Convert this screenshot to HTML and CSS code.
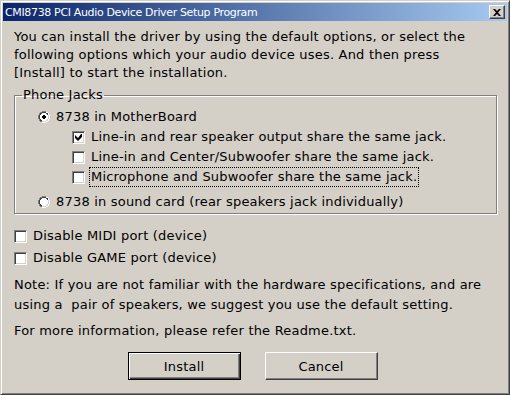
FILE: index.html
```html
<!DOCTYPE html>
<html>
<head>
<meta charset="utf-8">
<link rel="stylesheet" href="styles.css">
</head>
<body>
<div class="window">
  <div class="titlebar">
    <span class="title">CMI8738 PCI Audio Device Driver Setup Program</span>
    <span class="close"><svg width="8" height="7" viewBox="0 0 8 7"><path d="M0 0h2l2 2 2-2h2L5 3.5 8 7H6L4 5 2 7H0l3-3.5z" fill="#000"/></svg></span>
  </div>
  <div class="content">
    <p class="intro">You can install the driver by using the default options, or select the<br>following options which your audio device uses. And then press<br>[Install] to start the installation.</p>
    <fieldset class="group">
      <legend>Phone Jacks</legend>
      <div class="row lvl1">
        <span class="radio"><svg width="12" height="12" viewBox="0 0 12 12"><path d="M4 0h4v1h2v1h1v2h1v4h-1v2h-1v1H8v1H4v-1H2v-1H1V8H0V4h1V2h1V1h2z" fill="#808080"/><path d="M8 1h2v1h1v2h1v4h-1v2h-1v1H8v1H4v-1h4v-1h2V8h1V4h-1V2H8z" fill="#fff"/><path d="M4 1h4v1h2v2h1v4h-1v2H8v1H4v-1H2V8H1V4h1V2h2z" fill="#404040"/><path d="M4 2h4v1h1v1h1v4H9v1H8v1H4V9H3V8H2V4h1V3h1z" fill="#fff"/><path d="M10 4h1v4h-1v2H8v1H4v-1h4V9h1V8h1z" fill="#d4d0c8"/><path d="M5 4h2v1h1v2H7v1H5V7H4V5h1z" fill="#000"/></svg></span>
        <span class="label">8738 in MotherBoard</span>
      </div>
      <div class="row lvl2">
        <span class="check"><svg width="7" height="7" viewBox="0 0 7 7"><path d="M6 0h1v3L3 7 0 4V1l3 3z" fill="#000"/></svg></span>
        <span class="label">Line-in and rear speaker output share the same jack.</span>
      </div>
      <div class="row lvl2">
        <span class="check"></span>
        <span class="label">Line-in and Center/Subwoofer share the same jack.</span>
      </div>
      <div class="row lvl2">
        <span class="check"></span>
        <span class="label focus">Microphone and Subwoofer share the same jack.</span>
      </div>
      <div class="row lvl1 sep">
        <span class="radio"><svg width="12" height="12" viewBox="0 0 12 12"><path d="M4 0h4v1h2v1h1v2h1v4h-1v2h-1v1H8v1H4v-1H2v-1H1V8H0V4h1V2h1V1h2z" fill="#808080"/><path d="M8 1h2v1h1v2h1v4h-1v2h-1v1H8v1H4v-1h4v-1h2V8h1V4h-1V2H8z" fill="#fff"/><path d="M4 1h4v1h2v2h1v4h-1v2H8v1H4v-1H2V8H1V4h1V2h2z" fill="#404040"/><path d="M4 2h4v1h1v1h1v4H9v1H8v1H4V9H3V8H2V4h1V3h1z" fill="#fff"/><path d="M10 4h1v4h-1v2H8v1H4v-1h4V9h1V8h1z" fill="#d4d0c8"/></svg></span>
        <span class="label">8738 in sound card (rear speakers jack individually)</span>
      </div>
    </fieldset>
    <div class="row top first">
      <span class="check"></span>
      <span class="label">Disable MIDI port (device)</span>
    </div>
    <div class="row top">
      <span class="check"></span>
      <span class="label">Disable GAME port (device)</span>
    </div>
    <p class="note">Note: If you are not familiar with the hardware specifications, and are<br>using a&nbsp; pair of speakers, we suggest you use the default setting.</p>
    <p class="more">For more information, please refer the Readme.txt.</p>
    <div class="buttons">
      <button class="btn default">Install</button>
      <button class="btn">Cancel</button>
    </div>
  </div>
</div>
</body>
</html>
```
FILE: styles.css
```css
html, body {
  margin: 0;
  padding: 0;
  background: #d4d0c8;
}
body {
  font-family: "DejaVu Sans", sans-serif;
  font-size: 13px;
  letter-spacing: 0.2px;
  color: #000;
}
.window {
  box-sizing: border-box;
  width: 510px;
  height: 395px;
  background: #d4d0c8;
  border-top: 1px solid #d4d0c8;
  border-left: 1px solid #d4d0c8;
  border-right: 1px solid #404040;
  border-bottom: 1px solid #404040;
  box-shadow: inset 1px 1px 0 #fff, inset -1px -1px 0 #808080;
  padding: 2px;
  display: flex;
  flex-direction: column;
}
.titlebar {
  height: 18px;
  background: linear-gradient(to right, #0a246a, #a6caf0);
  display: flex;
  align-items: center;
  justify-content: space-between;
  padding: 0 2px 0 2px;
}
.title {
  color: #fff;
  font-size: 11px;
  letter-spacing: -0.35px;
  white-space: nowrap;
}
.close {
  box-sizing: border-box;
  width: 16px;
  height: 14px;
  background: #d4d0c8;
  border-top: 1px solid #fff;
  border-left: 1px solid #fff;
  border-right: 1px solid #404040;
  border-bottom: 1px solid #404040;
  box-shadow: inset -1px -1px 0 #808080;
  display: flex;
  align-items: center;
  justify-content: center;
}
.content {
  padding: 7px 10px 0 11px;
  display: flex;
  flex-direction: column;
}
p {
  margin: 0;
  white-space: nowrap;
}
.intro {
  line-height: 18px;
}
.group {
  margin: 4px 0 0 0;
  padding: 3px 0 1px 0;
  border: 1px solid #808080;
  box-shadow: 1px 1px 0 #fff, inset 1px 1px 0 #fff;
  display: block;
}
.group legend {
  padding: 0 1px;
  margin-left: 7px;
  line-height: 18px;
}
.row {
  display: flex;
  align-items: center;
  height: 20px;
}
.lvl1 {
  padding-left: 23px;
}
.lvl2 {
  padding-left: 57px;
}
.sep {
  margin-top: 5px;
}
.radio {
  width: 12px;
  height: 12px;
  margin-right: 5px;
  display: flex;
}
.check {
  box-sizing: border-box;
  width: 13px;
  height: 13px;
  background: #fff;
  border-top: 1px solid #808080;
  border-left: 1px solid #808080;
  border-right: 1px solid #fff;
  border-bottom: 1px solid #fff;
  box-shadow: inset 1px 1px 0 #404040, inset -1px -1px 0 #d4d0c8;
  margin-right: 5px;
  display: flex;
  align-items: center;
  justify-content: center;
  flex: none;
}
.label {
  white-space: nowrap;
  line-height: 18px;
  padding: 0 1px;
}
.focus {
  outline: 1px dotted #000;
  outline-offset: 0;
}
.top {
  height: 22px;
}
.first {
  margin-top: 11px;
}
.note {
  line-height: 20px;
  margin-top: 6px;
}
.more {
  line-height: 20px;
  margin-top: 6px;
}
.buttons {
  display: flex;
  justify-content: center;
  gap: 24px;
  margin-top: 11px;
  padding-right: 6px;
}
.btn {
  box-sizing: border-box;
  width: 113px;
  height: 28px;
  font-family: "DejaVu Sans", sans-serif;
  font-size: 13px;
  letter-spacing: 0.2px;
  background: #d4d0c8;
  color: #000;
  border-top: 1px solid #fff;
  border-left: 1px solid #fff;
  border-right: 1px solid #404040;
  border-bottom: 1px solid #404040;
  box-shadow: inset -1px -1px 0 #808080;
  padding: 0;
}
.btn.default {
  border: 1px solid #000;
  box-shadow: inset 1px 1px 0 #fff, inset -1px -1px 0 #404040, inset -2px -2px 0 #808080;
}
```
